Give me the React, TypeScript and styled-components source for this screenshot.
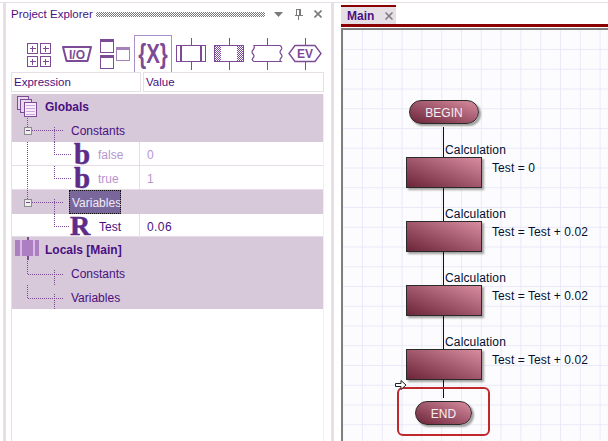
import React from "react";
import styled, { createGlobalStyle } from "styled-components";

const ink = "#7d4b96";
const textInk = "#4a1080";

const GlobalStyle = createGlobalStyle`
  html, body { margin: 0; padding: 0; background: #fff; }
  body { font-family: "Liberation Sans", Arial, sans-serif; font-size: 12px; color: ${textInk}; }
`;

const Page = styled.div`
  width: 608px;
  height: 441px;
  overflow: hidden;
  display: grid;
  grid-template-columns: 341px 1fr;
  position: relative;
  padding-top: 2px;
  box-sizing: border-box;
  &::before {
    content: "";
    position: absolute;
    left: 0;
    right: 0;
    top: 2px;
    height: 1px;
    background: #e6dfe6;
  }
`;

const Dock = styled.div`
  margin-left: 3px;
  margin-right: 7px;
  box-sizing: border-box;
  padding: 0 7px 0 5px;
  border-left: 3px solid #e6dfe6;
  border-right: 3px solid #e6dfe6;
  display: flex;
  flex-direction: column;
  min-width: 0;
`;

const TitleBar = styled.div`
  height: 18px;
  padding-top: 3px;
  display: flex;
  align-items: center;
  font-size: 11.5px;
  white-space: nowrap;
  color: ${textInk};
`;

const Gripper = styled.div`
  margin-left: auto;
  width: 169px;
  flex: none;
  height: 5px;
  background-image: conic-gradient(#777 25%, #fff 0 50%, #777 0 75%, #fff 0);
  background-size: 2px 2px;
`;

const TitleTools = styled.div`
  margin-left: 9px;
  margin-right: 2px;
  display: flex;
  align-items: center;
  gap: 11px;
  color: #7a7a7a;
`;

const Toolbar = styled.div`
  margin-top: 12px;
  padding-left: 9px;
  display: flex;
  height: 37px;
`;

const ToolButton = styled.div<{ $active?: boolean }>`
  width: 38px;
  height: 37px;
  box-sizing: border-box;
  flex: none;
  border: 1px solid ${p => (p.$active ? "#a98fcb" : "transparent")};
  border-bottom: none;
  display: flex;
  svg { margin: -1px; flex: none; }
`;

const Columns = styled.div`
  display: grid;
  grid-template-columns: 130px 181px;
  column-gap: 2px;
  height: 19px;
`;

const ColumnHead = styled.div`
  border: 1px solid #e6dfe6;
  padding: 1px 0 0 2px;
  line-height: 17px;
  font-size: 11.5px;
  color: ${textInk};
`;

const Tree = styled.div`
  margin-top: 3px;
  width: 313px;
  flex: 1;
  border-left: 1px solid #e2e2e2;
  border-right: 1px solid #f1f0e6;
  box-sizing: border-box;
`;

const Row = styled.div<{ $band?: boolean; $tall?: number }>`
  display: grid;
  grid-template-columns: 128px 1fr;
  height: ${p => p.$tall || 24}px;
  background: ${p => (p.$band ? "#d8c9da" : "#fff")};
  box-sizing: border-box;
  border-bottom: ${p => (p.$band ? "none" : "1px solid #e4dce6")};
`;

const NameCell = styled.div<{ $band?: boolean }>`
  display: flex;
  align-items: center;
  height: 100%;
  min-width: 0;
  border-right: ${p => (p.$band ? "none" : "1px solid #e4dce6")};
  svg { flex: none; }
`;

const ValueCell = styled.div<{ $muted?: boolean }>`
  padding: 1px 0 0 7px;
  display: flex;
  align-items: center;
  font-size: 12px;
  letter-spacing: 0.4px;
  color: ${p => (p.$muted ? "#b795cf" : textInk)};
`;

const Label = styled.span<{ $muted?: boolean; $bold?: boolean }>`
  font-size: 12px;
  padding-top: 2px;
  font-weight: ${p => (p.$bold ? 700 : 400)};
  color: ${p => (p.$muted ? "#b795cf" : textInk)};
`;

const SelectedLabel = styled.span`
  margin-left: -3px;
  width: 52px;
  height: 24px;
  box-sizing: border-box;
  line-height: 24px;
  padding-left: 2px;
  background: #79669a;
  color: #f1ebf8;
  border: 1px dotted #c0102a;
  outline: 1px dotted #111;
  outline-offset: -1px;
  font-size: 12px;
  white-space: nowrap;
`;

const TypeGlyph = styled.span<{ $w: number; $size: number; $x?: number }>`
  width: ${p => p.$w}px;
  padding-left: ${p => p.$x || 0}px;
  box-sizing: border-box;
  flex: none;
  font-family: "Liberation Serif", "DejaVu Serif", serif;
  font-weight: 700;
  font-size: ${p => p.$size}px;
  line-height: 24px;
  height: 24px;
  color: #5d2c88;
  -webkit-text-stroke: 0.5px #5d2c88;
`;

const Editor = styled.div`
  display: flex;
  flex-direction: column;
  min-width: 0;
`;

const TabStrip = styled.div`
  padding-top: 3px;
  display: flex;
  align-items: flex-end;
  border-bottom: 3px solid #8b0000;
`;

const Tab = styled.div`
  width: 55px;
  height: 19px;
  box-sizing: border-box;
  border-top: 2px solid #8b0000;
  background: #e6dfe6;
  display: flex;
  align-items: center;
  padding-left: 6px;
  font-weight: 700;
  font-size: 12px;
  color: ${textInk};
  gap: 11px;
`;

const Canvas = styled.div`
  flex: 1;
  position: relative;
  margin-top: 1px;
  border-left: 2px solid #7f7f7f;
  border-top: 2px solid #7f7f7f;
  background-color: #fcfcfe;
  background-image:
    linear-gradient(#e9e9fa 1px, transparent 1px),
    linear-gradient(90deg, #e9e9fa 1px, transparent 1px);
  background-size: 19.8px 19.75px;
  background-position: 19px 19px;
  padding: 70px 0 0 63px;
  display: flex;
  flex-direction: column;
  align-items: flex-start;
  font-size: 12px;
  color: #001030;
`;

const Terminal = styled.div<{ $w: number; $x: number; $gap?: number }>`
  width: ${p => p.$w}px;
  margin-left: ${p => p.$x}px;
  margin-top: ${p => p.$gap || 0}px;
  height: 24px;
  box-sizing: border-box;
  border: 1px solid #2a2a2a;
  border-radius: 12px;
  background: linear-gradient(to top right, #6b2438, #d88ca0);
  box-shadow: 2px 2px 2px #a0a0a0;
  color: #f6eef2;
  text-align: center;
  line-height: 25px;
  font-size: 12px;
`;

const Wire = styled.div<{ $h: number; $gap?: number }>`
  margin-left: 37px;
  margin-top: ${p => p.$gap || 0}px;
  height: ${p => p.$h}px;
  box-sizing: border-box;
  border-left: 1px solid #111;
  padding-left: 1px;
  display: flex;
  align-items: flex-end;
  line-height: 14px;
  white-space: nowrap;
  letter-spacing: 0.15px;
`;

const Step = styled.div`
  display: flex;
  align-items: center;
  height: 31px;
`;

const StepBox = styled.div`
  width: 76px;
  height: 31px;
  box-sizing: border-box;
  border: 1px solid #2a2a2a;
  background: linear-gradient(to top right, #6b2438, #d88ca0);
  box-shadow: 2px 2px 2px #a0a0a0;
  flex: none;
`;

const StepText = styled.span`
  margin: -9px 0 0 10px;
  white-space: nowrap;
  letter-spacing: 0.08px;
`;

const Highlight = styled.div`
  position: absolute;
  left: 54px;
  top: 357px;
  width: 93px;
  height: 49px;
  box-sizing: border-box;
  border: 2px solid #c0282e;
  border-radius: 6px;
`;

const Pointer = styled.svg`
  position: absolute;
  left: 52px;
  top: 350px;
`;

const dots = { stroke: ink, strokeWidth: 1, strokeDasharray: "1 1", fill: "none", shapeRendering: "crispEdges" as const };

function Expander({ y }: { y: number }) {
  return (
    <g shapeRendering="crispEdges">
      <rect x="12.5" y={y - 3.5} width="7" height="7" fill="#eee" stroke="#8c8c8c" />
      <path d={`M14 ${y}h4`} stroke={ink} />
    </g>
  );
}

function TreeLines({ width, d, expander }: { width: number; d: string; expander?: number }) {
  return (
    <svg width={width} height={24} viewBox={`0 0 ${width} 24`}>
      <path d={d} {...dots} />
      {expander !== undefined && <Expander y={expander} />}
    </svg>
  );
}

function ToolIcon({ children }: { children: React.ReactNode }) {
  return (
    <svg width={38} height={37} viewBox="0 0 38 37" fill="none" stroke={ink} strokeWidth={1}>
      {children}
    </svg>
  );
}

const IconText = styled.text<{ $size: number; $family?: string }>`
  font-family: ${p => p.$family || '"Liberation Sans", Arial, sans-serif'};
  font-weight: 700;
  font-size: ${p => p.$size}px;
  fill: ${ink};
  stroke: none;
`;

function Toolset() {
  const plus = (x: number, y: number) => (
    <g key={`${x}-${y}`} shapeRendering="crispEdges">
      <rect x={x + 0.5} y={y + 0.5} width="10" height="10" />
      <path d={`M${x + 2.5} ${y + 5.5}h6M${x + 5.5} ${y + 2.5}v6`} />
    </g>
  );
  const stems = <path d="M19 3v7M19 27v8" strokeWidth="1" shapeRendering="crispEdges" />;
  return (
    <Toolbar>
      <ToolButton>
        <ToolIcon>{[plus(7, 8), plus(20, 8), plus(7, 21), plus(20, 21)]}</ToolIcon>
      </ToolButton>
      <ToolButton>
        <ToolIcon>
          <path d="M5 12H33L29.500 26H8.500Z" strokeWidth="2" strokeLinejoin="round" />
          <IconText x="19" y="24" $size={12} textAnchor="middle">I/O</IconText>
        </ToolIcon>
      </ToolButton>
      <ToolButton>
        <ToolIcon>
          <g shapeRendering="crispEdges">
            <rect x="4.500" y="4.500" width="13" height="13" />
            <rect x="4" y="4" width="14" height="3" fill={ink} stroke="none" />
            <rect x="4.500" y="20.500" width="13" height="13" />
            <rect x="4" y="20" width="14" height="3" fill={ink} stroke="none" />
            <rect x="20.500" y="12.500" width="13" height="13" stroke="#a583b8" />
            <rect x="20" y="12" width="14" height="3" fill="#a583b8" stroke="none" />
          </g>
        </ToolIcon>
      </ToolButton>
      <ToolButton $active>
        <ToolIcon>
          <IconText x="0" y="0" $size={27} transform="translate(19 28) scale(.76 1)" textAnchor="middle">{"{X}"}</IconText>
        </ToolIcon>
      </ToolButton>
      <ToolButton>
        <ToolIcon>
          {stems}
          <g shapeRendering="crispEdges">
            <rect x="4.500" y="10.500" width="29" height="16" strokeWidth="1" />
            <rect x="8" y="10" width="2" height="17" fill={ink} stroke="none" />
            <rect x="28" y="10" width="2" height="17" fill={ink} stroke="none" />
          </g>
        </ToolIcon>
      </ToolButton>
      <ToolButton>
        <ToolIcon>
          <defs>
            <pattern id="hatch" width="2" height="2" patternUnits="userSpaceOnUse">
              <rect width="1" height="1" fill={ink} stroke="none" />
              <rect x="1" y="1" width="1" height="1" fill={ink} stroke="none" />
            </pattern>
          </defs>
          {stems}
          <g shapeRendering="crispEdges">
            <rect x="4.500" y="10.500" width="29" height="16" />
            <rect x="5" y="11" width="6" height="15" fill="url(#hatch)" stroke="none" />
            <rect x="27" y="11" width="6" height="15" fill="url(#hatch)" stroke="none" />
          </g>
        </ToolIcon>
      </ToolButton>
      <ToolButton>
        <ToolIcon>
          {stems}
          <path d="M6 10.500H32Q35 13 33 15Q31 17 33 19Q35 21 33 23Q31 25 33 26.500H6Q3 25 5 23Q7 21 5 19Q3 17 5 15Q7 13 6 10.500Z" strokeWidth="1.200" />
        </ToolIcon>
      </ToolButton>
      <ToolButton>
        <ToolIcon>
          {stems}
          <path d="M9 10.500H29L35 18.500L29 26.500H9L3 18.500Z" strokeWidth="1.400" />
          <IconText x="19" y="23" $size={12} textAnchor="middle">EV</IconText>
        </ToolIcon>
      </ToolButton>
    </Toolbar>
  );
}

function Flow({ text }: { text: string }) {
  return (
    <>
      <Wire $h={33}>Calculation</Wire>
      <Step>
        <StepBox />
        <StepText>{text}</StepText>
      </Step>
    </>
  );
}

export default function App() {
  return (
    <Page>
      <GlobalStyle />
      <Dock>
        <TitleBar>
          Project Explorer
          <Gripper />
          <TitleTools>
            <svg width="9" height="5" viewBox="0 0 9 5"><path d="M0 0H9L4.500 5Z" fill="#7a7a7a" /></svg>
            <svg width="9" height="11" viewBox="0 0 9 11" fill="none" stroke="#7a7a7a"><path d="M2.500 .5h4v6h-4zM.5 6.500h8M4.500 7v4M5.500 1v5" shapeRendering="crispEdges" /></svg>
            <svg width="8" height="8" viewBox="0 0 8 8" stroke="#7a7a7a" strokeWidth="1.600"><path d="M.5 .5l7 7M7.500 .5l-7 7" /></svg>
          </TitleTools>
        </TitleBar>
        <Toolset />
        <Columns>
          <ColumnHead>Expression</ColumnHead>
          <ColumnHead>Value</ColumnHead>
        </Columns>
        <Tree>
          <Row $band>
            <NameCell $band>
              <svg width={33} height={24} viewBox="0 0 33 24" fill="#fbeefc" stroke={ink} shapeRendering="crispEdges">
                <path d="M15 22v2" {...dots} />
                <rect x="5.500" y="2.500" width="11" height="13" fill="#e8d8ec" />
                <rect x="8.500" y="5.500" width="11" height="13" fill="#e8d8ec" />
                <rect x="12.500" y="8.500" width="12" height="14" />
                <path d="M14 11.500h9M14 14.500h9M14 17.500h9M14 20.500h9" stroke="#c9a6dc" />
              </svg>
              <Label $bold>Globals</Label>
            </NameCell>
            <ValueCell />
          </Row>
          <Row $band>
            <NameCell $band>
              <TreeLines width={59} d="M15.500 0V9M20 12.500H51M42.500 9V24" expander={12.5} />
              <Label>Constants</Label>
            </NameCell>
            <ValueCell />
          </Row>
          <Row>
            <NameCell>
              <TreeLines width={60} d="M15.500 0V24M42.500 0V12.500H60" />
              <TypeGlyph $w={26} $size={29} $x={2}>b</TypeGlyph>
              <Label $muted>false</Label>
            </NameCell>
            <ValueCell $muted>0</ValueCell>
          </Row>
          <Row>
            <NameCell>
              <TreeLines width={60} d="M15.500 0V24M42.500 0V12.500H60" />
              <TypeGlyph $w={26} $size={29} $x={2}>b</TypeGlyph>
              <Label $muted>true</Label>
            </NameCell>
            <ValueCell $muted>1</ValueCell>
          </Row>
          <Row $band>
            <NameCell $band>
              <TreeLines width={60} d="M15.500 0V9M20 12.500H51M42.500 9V24" expander={12.5} />
              <SelectedLabel>Variables</SelectedLabel>
            </NameCell>
            <ValueCell />
          </Row>
          <Row $tall={23}>
            <NameCell>
              <TreeLines width={58} d="M42.500 0V12.500H58" />
              <TypeGlyph $w={29} $size={28}>R</TypeGlyph>
              <Label>Test</Label>
            </NameCell>
            <ValueCell>0.06</ValueCell>
          </Row>
          <Row $band>
            <NameCell $band>
              <svg width={33} height={24} viewBox="0 0 33 24" shapeRendering="crispEdges">
                <rect x="3" y="3" width="24" height="16" fill="#ab7fc0" />
                <rect x="8" y="3" width="2" height="16" fill="#d8b8e4" />
                <rect x="21" y="3" width="2" height="16" fill="#d8b8e4" />
                <rect x="14.500" y="0" width="2" height="3" fill={ink} />
                <rect x="14.500" y="19" width="2" height="4" fill={ink} />
              </svg>
              <Label $bold>Locals [Main]</Label>
            </NameCell>
            <ValueCell />
          </Row>
          <Row $band>
            <NameCell $band>
              <TreeLines width={59} d="M15.500 0V13M15.500 13H51M42.500 9V24" />
              <Label>Constants</Label>
            </NameCell>
            <ValueCell />
          </Row>
          <Row $band>
            <NameCell $band>
              <TreeLines width={59} d="M15.500 0V13M15.500 13H51M42.500 9V24" />
              <Label>Variables</Label>
            </NameCell>
            <ValueCell />
          </Row>
        </Tree>
      </Dock>
      <Editor>
        <TabStrip>
          <Tab>
            Main
            <svg width="8" height="8" viewBox="0 0 8 8" stroke="#7a7a7a" strokeWidth="1.500"><path d="M.5 .5l7 7M7.500 .5l-7 7" /></svg>
          </Tab>
        </TabStrip>
        <Canvas>
          <Terminal $w={70} $x={3}>BEGIN</Terminal>
          <Wire $h={30} $gap={3}>Calculation</Wire>
          <Step>
            <StepBox />
            <StepText>Test = 0</StepText>
          </Step>
          <Flow text="Test = Test + 0.02" />
          <Flow text="Test = Test + 0.02" />
          <Flow text="Test = Test + 0.02" />
          <Wire $h={18} />
          <Terminal $w={57} $x={9} $gap={3}>END</Terminal>
          <Highlight />
          <Pointer width="12" height="10" viewBox="0 0 12 10">
            <path d="M.5 3.500H6V.5L11 5 6 9.500V6.500H.5Z" fill="#fff" stroke="#222" />
          </Pointer>
        </Canvas>
      </Editor>
    </Page>
  );
}
